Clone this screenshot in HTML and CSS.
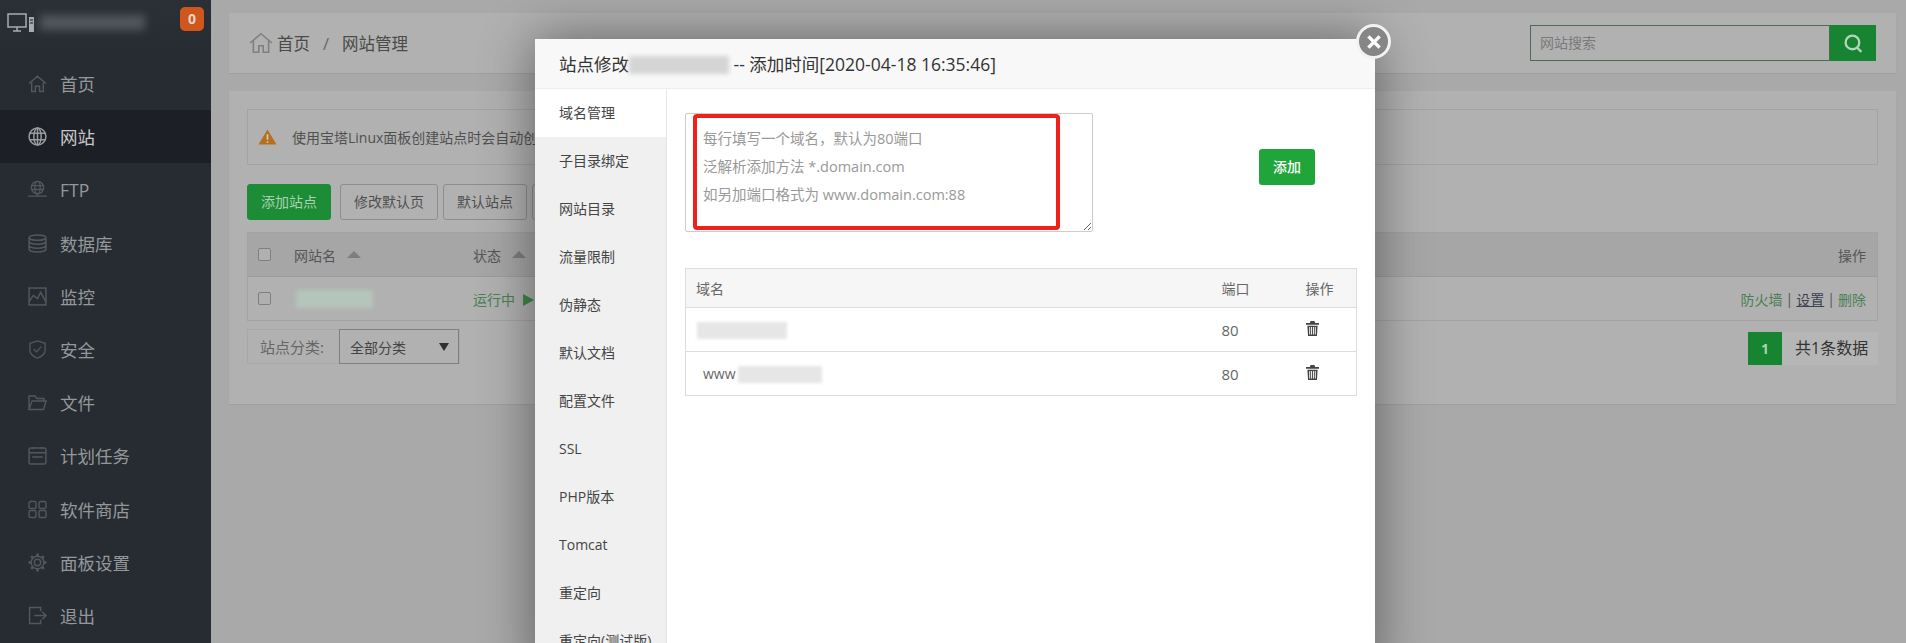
FILE: index.html
```html
<!DOCTYPE html>
<html lang="zh-CN">
<head>
<meta charset="utf-8">
<title>网站管理</title>
<link rel="stylesheet" href="styles.css">
</head>
<body>
<div class="app">
  <aside class="sidebar">
    <div class="side-top">
      <svg class="logo" viewBox="0 0 28 20" fill="none" stroke="#a9acae" stroke-width="1.5"><rect x="1" y="1" width="18" height="13"/><path d="M6 18h8M10 14v4"/><rect x="22" y="4" width="5" height="15" fill="#a9acae" stroke="none"/><path d="M23 7h3M23 10h3" stroke="#444"/></svg>
      <span class="blur-name"></span>
      <span class="badge">0</span>
    </div>
    <nav class="side-nav">
      <a class="side-item"><svg viewBox="0 0 18 18"><path d="M1 9l8-7 8 7M3.500 8v8.500h3.500v-5h4v5h3.500V8"/></svg>首页</a>
      <a class="side-item active"><svg viewBox="0 0 18 18"><circle cx="9" cy="9" r="8"/><ellipse cx="9" cy="9" rx="3.500" ry="8"/><path d="M1.500 6h15M1.500 12h15M9 1v16"/></svg>网站</a>
      <a class="side-item"><svg viewBox="0 0 20 18"><circle cx="10" cy="7" r="6.500"/><ellipse cx="10" cy="7" rx="2.800" ry="6.500"/><path d="M4 5h12M4 9h12M10 13.500v2.500M0 16h20"/></svg>FTP</a>
      <a class="side-item"><svg viewBox="0 0 18 18"><ellipse cx="9" cy="3.500" rx="8" ry="2.500"/><path d="M1 3.500v11c0 1.400 3.600 2.500 8 2.500s8-1.100 8-2.500v-11M1 7.200c0 1.400 3.600 2.500 8 2.500s8-1.100 8-2.500M1 11c0 1.400 3.600 2.500 8 2.500s8-1.100 8-2.500"/></svg>数据库</a>
      <a class="side-item"><svg viewBox="0 0 18 18"><rect x="1" y="1" width="16" height="16"/><path d="M1 14l4-6 4 3 3-6 5 9"/></svg>监控</a>
      <a class="side-item"><svg viewBox="0 0 18 20"><path d="M9 1l8 2.500v7c0 4-3.500 7-8 8.500-4.500-1.500-8-4.500-8-8.500v-7z"/><path d="M5 9.500l3 3 5-5.500"/></svg>安全</a>
      <a class="side-item"><svg viewBox="0 0 19 17"><path d="M1 15V2h6l2 2.500h7V7M1 15.500h14.500L18 7H4z"/></svg>文件</a>
      <a class="side-item"><svg viewBox="0 0 18 18"><rect x="1" y="2" width="16" height="15" rx="1.500"/><path d="M1 6.500h16M4 10.500h10M5 1v2M13 1v2"/></svg>计划任务</a>
      <a class="side-item"><svg viewBox="0 0 19 18"><rect x="1" y="1" width="7" height="7" rx="1.500"/><rect x="11" y="1" width="7" height="7" rx="1.500"/><rect x="1" y="10" width="7" height="7" rx="1.500"/><rect x="11" y="10" width="7" height="7" rx="1.500"/></svg>软件商店</a>
      <a class="side-item"><svg viewBox="0 0 18 18"><circle cx="9" cy="9" r="3"/><circle cx="9" cy="9" r="6"/><path stroke-width="2.500" d="M9 0.500v2.500M9 15v2.500M0.500 9H3M15 9h2.500M3 3l1.800 1.800M13.200 13.200L15 15M15 3l-1.800 1.800M4.800 13.200L3 15"/></svg>面板设置</a>
      <a class="side-item"><svg viewBox="0 0 18 18"><path d="M12 5V1.500H1.500v15H12V13M6 9h11M13.500 5.500L17 9l-3.500 3.500"/></svg>退出</a>
    </nav>
  </aside>

  <main class="main">
    <header class="card topbar">
      <div class="crumbs">
        <svg class="crumb-home" viewBox="0 0 22 20"><path d="M1 10L11 1.500 21 10M4 8v10.500h5v-6h4v6h5V8"/></svg>
        <span>首页</span><span class="crumb-sep">/</span><span>网站管理</span>
      </div>
      <div class="search">
        <span class="search-input">网站搜索</span>
        <span class="search-btn"><svg viewBox="0 0 20 20"><circle cx="9" cy="9" r="6.500"/><path d="M13.500 14l4 4"/></svg></span>
      </div>
    </header>

    <section class="card panel">
      <div class="notice">
        <svg class="warn" viewBox="0 0 20 18"><path d="M10 1l9.500 16H.5z" fill="#b5701d"/><path d="M10 6v6M10 13.500v1.500" stroke="#d8c9b4" stroke-width="1.800"/></svg>
        <span>使用宝塔Linux面板创建站点时会自动创</span>
      </div>
      <div class="toolbar">
        <span class="btn primary">添加站点</span>
        <span class="btn">修改默认页</span>
        <span class="btn">默认站点</span>
        <span class="btn btn-hidden"></span>
      </div>
      <div class="grid">
        <div class="grid-row head">
          <span class="check"></span><span class="col-name">网站名 <i class="tri"></i></span><span class="col-state">状态 <i class="tri"></i></span><span class="col-op">操作</span>
        </div>
        <div class="grid-row">
          <span class="check"></span><span class="col-name"><span class="blur-site"></span></span><span class="col-state run">运行中 <i class="play"></i></span>
          <span class="col-op"><span class="run">防火墙</span><span class="bar">|</span><u class="set">设置</u><span class="bar">|</span><span class="run">删除</span></span>
        </div>
      </div>
      <div class="foot">
        <div class="filter">
          <span class="filter-label">站点分类:</span>
          <span class="select">全部分类<i class="down"></i></span>
        </div>
        <div class="pager"><span class="page-on">1</span><span class="page-total">共1条数据</span></div>
      </div>
    </section>
  </main>
</div>

<div class="modal">
  <div class="modal-title">站点修改<span class="blur-title"></span> -- 添加时间[2020-04-18 16:35:46]</div>
  <div class="modal-body">
    <ul class="tabs">
      <li class="on">域名管理</li><li>子目录绑定</li><li>网站目录</li><li>流量限制</li><li>伪静态</li><li>默认文档</li><li>配置文件</li><li>SSL</li><li>PHP版本</li><li>Tomcat</li><li>重定向</li><li>重定向(测试版)</li>
    </ul>
    <div class="content">
      <div class="add-row">
        <div class="area">
          <textarea class="area-input" aria-label="域名"></textarea>
          <div class="area-hint"><p>每行填写一个域名，默认为80端口</p><p>泛解析添加方法 *.domain.com</p><p>如另加端口格式为 www.domain.com:88</p></div>
          <div class="red-box"></div>
        </div>
        <span class="add-btn">添加</span>
      </div>
      <table class="domains">
        <thead><tr><th>域名</th><th class="c-port">端口</th><th class="c-op">操作</th></tr></thead>
        <tbody>
          <tr><td><span class="blur-d1"></span></td><td class="num">80</td><td><svg class="trash" viewBox="0 0 14 16"><path d="M5 0h4l1 2h4v2H0V2h4zM1.500 5h11l-.7 11H2.200zM3.500 6.500v8h1v-8zM5.500 6.500v8h1v-8zM7.500 6.500v8h1v-8zM9.500 6.500v8h1v-8z" fill-rule="evenodd"/></svg></td></tr>
          <tr><td class="www">www<span class="blur-d2"></span></td><td class="num">80</td><td><svg class="trash" viewBox="0 0 14 16"><path d="M5 0h4l1 2h4v2H0V2h4zM1.500 5h11l-.7 11H2.200zM3.500 6.500v8h1v-8zM5.500 6.500v8h1v-8zM7.500 6.500v8h1v-8zM9.500 6.500v8h1v-8z" fill-rule="evenodd"/></svg></td></tr>
        </tbody>
      </table>
    </div>
  </div>
</div>
<div class="close"><svg viewBox="0 0 16 16"><path d="M3 3l10 10M13 3L3 13"/></svg></div>
</body>
</html>
```
FILE: styles.css
```css
* { box-sizing: border-box; }
html, body { margin: 0; height: 100%; overflow: hidden; }
body {
  font-family: "Open Sans", "Noto Sans CJK SC", sans-serif;
  font-size: 14px;
  color: #444;
  background: #a9a9a9;
}
.app { display: flex; height: 643px; }

/* sidebar */
.sidebar { width: 211px; flex: none; background: #272c33; }
.side-top {
  height: 57px;
  display: flex;
  align-items: center;
  padding: 0 7px;
  background: linear-gradient(#2b3037, #272c33);
}
.logo { width: 28px; height: 20px; margin-top: -12px; }
.blur-name {
  width: 105px; height: 15px; margin: -12px 0 0 5px;
  background: #53575c;
  filter: blur(4px);
}
.badge {
  margin: -20px 0 0 auto;
  width: 24px; height: 24px;
  border-radius: 5px;
  background: #cf571d;
  color: #e6d6c8;
  font-weight: 700;
  font-size: 14px;
  line-height: 24px;
  text-align: center;
}
.side-nav { display: flex; flex-direction: column; }
.side-item {
  height: 53.200px;
  display: flex;
  align-items: center;
  gap: 13px;
  padding-left: 28px;
  font-size: 17.500px;
  color: #95989a;
}
.side-item svg {
  width: 19px; height: 19px;
  fill: none;
  stroke: #53575b;
  stroke-width: 1.400;
}
.side-item.active { background: #1c1f26; color: #c8c8c8; }
.side-item.active svg { stroke: #9a9c9e; }

/* main */
.main { flex: 1; min-width: 0; padding: 13px 10px 0 18px; }
.card { background: #b1b1b1; box-shadow: 0 1px 1px #a0a0a0; }
.topbar {
  height: 60px;
  display: flex;
  align-items: center;
  justify-content: space-between;
  padding: 0 20px;
  margin-bottom: 18px;
}
.crumbs { display: flex; align-items: center; font-size: 16.500px; color: #4a4a4a; }
.crumb-home { width: 24px; height: 22px; margin-right: 4px; fill: none; stroke: #808080; stroke-width: 1.500; }
.crumb-sep { margin: 0 13px; color: #666; }
.search { display: flex; height: 36px; }
.search-input {
  width: 300px;
  border: 1px solid #4d6b52;
  padding-left: 9px;
  line-height: 34px;
  color: #7a7a7a;
}
.search-btn {
  width: 46px;
  background: #178432;
  display: flex; align-items: center; justify-content: center;
}
.search-btn svg { width: 21px; height: 21px; fill: none; stroke: #b6d4bc; stroke-width: 2.200; }

.panel { height: 313px; padding: 18px; }
.notice {
  height: 56px;
  border: 1px solid #a3a3a3;
  display: flex;
  align-items: center;
  gap: 15px;
  padding-left: 10px;
  color: #505050;
  margin-bottom: 19px;
  white-space: nowrap;
}
.warn { width: 19px; height: 18px; flex: none; }
.toolbar { display: flex; gap: 5px; margin-bottom: 12px; }
.btn {
  height: 36px;
  padding: 0 13px;
  border: 1px solid #8e8e8e;
  border-radius: 3px;
  line-height: 34px;
  color: #505050;
}
.btn-hidden { width: 40px; }
.btn.primary {
  background: #1c8c36;
  border-color: #1c8c36;
  color: #a9d2b2;
  margin-right: 4px;
}
.grid { border: 1px solid #a3a3a3; }
.grid-row {
  height: 43px;
  display: flex;
  align-items: center;
  padding-left: 10px;
  color: #555;
}
.grid-row.head { height: 44px; background: #a6a6a6; border-bottom: 1px solid #9c9c9c; }
.check {
  width: 13px; height: 13px;
  border: 1px solid #7f7f7f;
  border-radius: 2px;
  background: #b0b0b0;
}
.col-name { width: 179px; margin-left: 23px; }
.col-state { width: 70px; white-space: nowrap; }
.col-op { margin-left: auto; padding-right: 11px; display: flex; gap: 3px; }
.bar { color: #555; }
.tri {
  display: inline-block;
  border: 7px solid transparent;
  border-top: 0;
  border-bottom-color: #7e7e7e;
  margin-left: 7px;
  vertical-align: 3px;
}
.play {
  display: inline-block;
  border: 6px solid transparent;
  border-right: 0;
  border-left: 11px solid #3d8b46;
  margin-left: 4px;
  vertical-align: -1px;
}
.run { color: #4d7f56; }
.set { color: #3c4250; }
.blur-site {
  display: block;
  width: 77px; height: 18px;
  margin-left: 2px;
  background: #b4c6bb;
  filter: blur(2px);
}
.foot { display: flex; justify-content: space-between; align-items: flex-start; margin-top: 8px; }
.filter { display: flex; height: 35px; border: 1px solid #a8a8a8; }
.filter-label { width: 91px; padding-left: 12px; line-height: 35px; font-size: 15px; color: #666; }
.select {
  width: 120px;
  margin: -1px 0;
  border: 1px solid #808080;
  padding-left: 10px;
  color: #444;
  display: flex; align-items: center;
}
.down {
  border: 5px solid transparent;
  border-bottom: 0;
  border-top: 8px solid #2f2f2f;
  margin-left: auto;
  margin-right: 9px;
}
.pager { display: flex; margin-top: 3px; height: 33px; }
.page-on {
  width: 34px;
  background: #178432;
  color: #a9d2b2;
  font-weight: 700;
  text-align: center;
  line-height: 33px;
}
.page-total {
  width: 96px;
  background: #b6b6b6;
  font-size: 16px;
  color: #333;
  line-height: 33px;
  padding-left: 13px;
  white-space: nowrap;
}

/* modal */
.modal {
  position: absolute;
  left: 535px; top: 39px;
  width: 840px; height: 640px;
  background: #fff;
  box-shadow: 0 0 50px rgba(0, 0, 0, .45);
  display: flex;
  flex-direction: column;
}
.modal-title {
  height: 50px;
  flex: none;
  background: #f8f8f8;
  border-bottom: 1px solid #eee;
  padding-left: 24px;
  line-height: 51px;
  font-size: 17.500px;
  color: #333;
  white-space: nowrap;
}
.blur-title {
  display: inline-block;
  width: 100px; height: 18px;
  vertical-align: -3px;
  background: #d5d5d5;
  filter: blur(2px);
}
.modal-body { flex: 1; display: flex; min-height: 0; overflow: hidden; }
.tabs {
  width: 132px; flex: none;
  margin: 0; padding: 0;
  list-style: none;
  background: #f0f0f0;
  border-right: 1px solid #e6e6e6;
}
.tabs li {
  height: 48px;
  padding-left: 24px;
  line-height: 48px;
  font-size: 14px;
  color: #444;
  white-space: nowrap;
}
.tabs li.on { background: #fff; }
.content { flex: 1; padding: 24px 18px 0 18px; }
.add-row { display: flex; align-items: flex-start; gap: 166px; margin-bottom: 36px; }
.area { position: relative; width: 408px; height: 119px; }
.area-input {
  display: block;
  width: 100%; height: 100%;
  border: 1px solid #ccc;
  border-radius: 2px;
  background: #fff;
  margin: 0;
}
.area-hint {
  position: absolute;
  left: 18px; top: 12px;
  font-size: 14.500px;
  color: #999;
  line-height: 28px;
  white-space: nowrap;
}
.area-hint p { margin: 0; }
.red-box {
  position: absolute;
  left: 8px; top: 1px;
  width: 367px; height: 116px;
  border: 4px solid #f0201a;
  border-radius: 4px;
}
.add-btn {
  width: 56px; height: 36px;
  margin-top: 36px;
  background: #20a53a;
  border-radius: 3px;
  color: #fff;
  font-size: 14px;
  font-weight: 500;
  line-height: 36px;
  text-align: center;
}
.domains {
  width: 672px;
  border-collapse: collapse;
  table-layout: fixed;
  border: 1px solid #ddd;
  font-size: 14px;
  color: #666;
}
.domains th {
  height: 39px;
  background: #f6f6f6;
  font-weight: 400;
  text-align: left;
  padding: 0 10px;
  color: #666;
}
.domains td {
  height: 44px;
  padding: 0 10px;
  border-top: 1px solid #ddd;
}
.domains .c-port { width: 84px; }
.domains .c-op { width: 61px; }
.domains .www { padding-left: 17px; }
.domains .num { font-size: 15px; }
.blur-d1, .blur-d2 {
  display: inline-block;
  height: 17px;
  background: #e6e6e6;
  filter: blur(1.500px);
  vertical-align: middle;
}
.blur-d1 { width: 90px; margin-left: 1px; }
.blur-d2 { width: 84px; margin-left: 2px; }
.trash { display: block; width: 13px; height: 15px; fill: #444; margin-top: -2px; }
.close {
  position: absolute;
  left: 1356px; top: 24px;
  width: 35px; height: 35px;
  border-radius: 50%;
  background: #868686;
  border: 3px solid #f2f2f2;
  display: flex; align-items: center; justify-content: center;
}
.close svg { width: 18px; height: 18px; fill: none; stroke: #fff; stroke-width: 3; }
```
